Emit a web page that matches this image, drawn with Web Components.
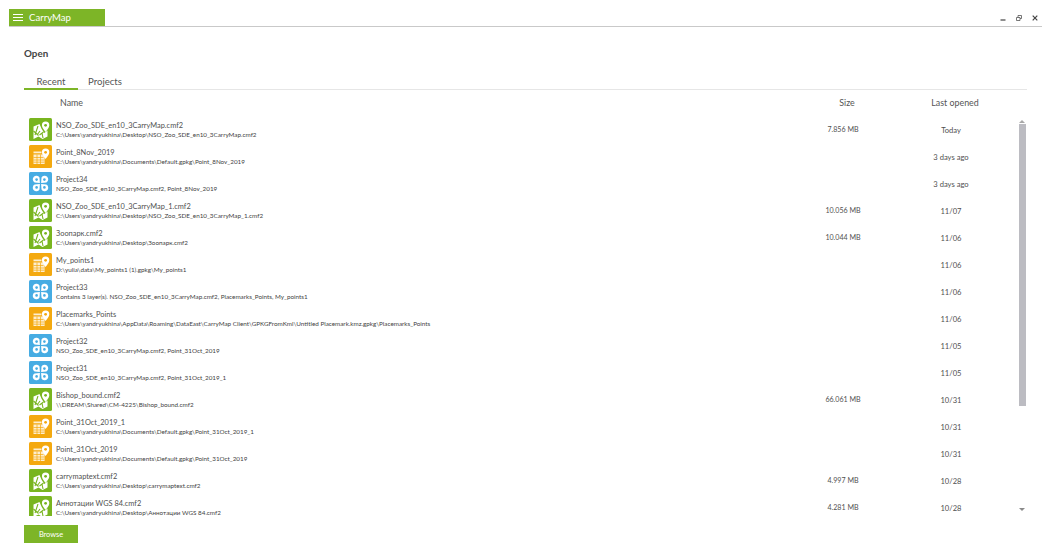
<!DOCTYPE html>
<html>
<head>
<meta charset="utf-8">
<title>CarryMap</title>
<style>
	html, body { margin: 0; padding: 0; background: #fff; height: 100%; overflow: hidden; }
</style>
</head>
<body>
<carry-app></carry-app>
<script>
const FILES = [
	["map", "NSO_Zoo_SDE_en10_3CarryMap.cmf2", "C:\\Users\\yandryukhina\\Desktop\\NSO_Zoo_SDE_en10_3CarryMap.cmf2", "7.856 MB", "Today"],
	["gpkg", "Point_8Nov_2019", "C:\\Users\\yandryukhina\\Documents\\Default.gpkg\\Point_8Nov_2019", "", "3 days ago"],
	["project", "Project34", "NSO_Zoo_SDE_en10_3CarryMap.cmf2, Point_8Nov_2019", "", "3 days ago"],
	["map", "NSO_Zoo_SDE_en10_3CarryMap_1.cmf2", "C:\\Users\\yandryukhina\\Desktop\\NSO_Zoo_SDE_en10_3CarryMap_1.cmf2", "10.056 MB", "11/07"],
	["map", "Зоопарк.cmf2", "C:\\Users\\yandryukhina\\Desktop\\Зоопарк.cmf2", "10.044 MB", "11/06"],
	["gpkg", "My_points1", "D:\\yulia\\data\\My_points1 (1).gpkg\\My_points1", "", "11/06"],
	["project", "Project33", "Contains 3 layer(s). NSO_Zoo_SDE_en10_3CarryMap.cmf2, Placemarks_Points, My_points1", "", "11/06"],
	["gpkg", "Placemarks_Points", "C:\\Users\\yandryukhina\\AppData\\Roaming\\DataEast\\CarryMap Client\\GPKGFromKml\\Untitled Placemark.kmz.gpkg\\Placemarks_Points", "", "11/06"],
	["project", "Project32", "NSO_Zoo_SDE_en10_3CarryMap.cmf2, Point_31Oct_2019", "", "11/05"],
	["project", "Project31", "NSO_Zoo_SDE_en10_3CarryMap.cmf2, Point_31Oct_2019_1", "", "11/05"],
	["map", "Bishop_bound.cmf2", "\\\\DREAM\\Shared\\CM-4225\\Bishop_bound.cmf2", "66.061 MB", "10/31"],
	["gpkg", "Point_31Oct_2019_1", "C:\\Users\\yandryukhina\\Documents\\Default.gpkg\\Point_31Oct_2019_1", "", "10/31"],
	["gpkg", "Point_31Oct_2019", "C:\\Users\\yandryukhina\\Documents\\Default.gpkg\\Point_31Oct_2019", "", "10/31"],
	["map", "carrymaptext.cmf2", "C:\\Users\\yandryukhina\\Desktop\\carrymaptext.cmf2", "4.997 MB", "10/28"],
	["map", "Аннотации WGS 84.cmf2", "C:\\Users\\yandryukhina\\Desktop\\Аннотации WGS 84.cmf2", "4.281 MB", "10/28"]
];

const PIN = `<path d="M16.6 3.6a3.7 3.7 0 0 0-3.7 3.7c0 2.6 3.7 6.6 3.7 6.6s3.7-4 3.7-6.6a3.7 3.7 0 0 0-3.7-3.7z" fill="#fff"/>`;

// teardrop whose tip points at the middle of the icon
const DROP = `<path d="M10.9 10.9L5.6 10.5A3.6 3.6 0 1 1 10.5 5.6Z" fill="#fff"/>`;

const GLYPHS = {
	map: (bg) => `
		<path d="M4.5 8.5l6-2.5 2.2 5 2.6 4 3.2-2.4v6l-5 2.4-4-2.4-5 2.4z" fill="#fff"/>
		<path d="M4.5 13l5 4.5M9 8l-3 9M11 13l-3 4M13 15l1 5M10.5 17l4-3" stroke="${bg}" stroke-width="1.1" fill="none"/>
		${PIN}<circle cx="16.6" cy="7.3" r="1.4" fill="${bg}"/>`,
	gpkg: (bg) => `
		<path d="M4.5 6.5h8v1.8h-8zM4.5 9.5h9.5l1.6 3v6.5H4.5z" fill="#fff" opacity=".8"/>
		<path d="M4.5 12.5h10M4.5 15h11M4.5 17.2h11M8 9.5v9.5M11.5 9.5v9.5" stroke="${bg}" stroke-width=".7" fill="none"/>
		${PIN}<circle cx="16.6" cy="7.3" r="1.4" fill="${bg}"/>`,
	project: (bg) => [0, 90, 180, 270].map((deg) => `
		<g transform="rotate(${deg} 11.5 11.5)">
			${DROP}<circle cx="7.6" cy="7.6" r="1.3" fill="${bg}"/>
		</g>`).join("")
};

const COLORS = { map: "#79b51f", gpkg: "#f4a90f", project: "#46ace3" };

class FileIcon extends HTMLElement {
	connectedCallback() {
		const kind = this.getAttribute("kind") || "map";
		const bg = COLORS[kind];
		this.attachShadow({ mode: "open" }).innerHTML = `
      <style>
        :host { display: block; width: 23px; height: 23px; }
        svg { display: block; }
      </style>
      <svg width="23" height="23" viewBox="0 0 23 23">
        <rect width="23" height="23" rx="1.5" fill="${bg}"/>
        ${GLYPHS[kind](bg)}
      </svg>
    `;
	}
}
customElements.define("file-icon", FileIcon);

class FileRow extends HTMLElement {
	connectedCallback() {
		this.attachShadow({ mode: "open" }).innerHTML = `
      <style>
        :host {
          display: grid;
          grid-template-columns: 27px 737px 100px 8px 100px;
          align-items: center;
          height: 27px;
          padding-left: 5px;
          color: #4a4a4a;
          flex: none;
        }
        .text { min-width: 0; }
        .name { font-size: 7.4px; line-height: 9px; color: #505050; white-space: nowrap; }
        .path { font-size: 6.3px; line-height: 9px; color: #3f3f3f; white-space: nowrap; }
        .size, .date { text-align: center; color: #505050; }
        .date { grid-column: 5; font-size: 7.6px; }
        .size { grid-column: 3; font-size: 7.1px; }
      </style>
      <file-icon kind="${this.getAttribute("kind")}"></file-icon>
      <div class="text">
        <div class="name"><slot name="name"></slot></div>
        <div class="path"><slot name="path"></slot></div>
      </div>
      <div class="size"><slot name="size"></slot></div>
      <div class="date"><slot name="date"></slot></div>
    `;
	}
}
customElements.define("file-row", FileRow);

class FileList extends HTMLElement {
	constructor() {
		super();
		this.attachShadow({ mode: "open" }).innerHTML = `
      <style>
        :host {
          display: flex;
          flex-direction: column;
          height: 400px;
          overflow: hidden;
        }
      </style>
      <slot></slot>
    `;
	}

	set files(list) {
		list.forEach(([kind, name, path, size, date]) => {
			const row = document.createElement("file-row");
			row.setAttribute("kind", kind);
			const parts = { name, path, size, date };
			for (const key in parts) {
				const span = document.createElement("span");
				span.slot = key;
				span.textContent = parts[key];
				row.appendChild(span);
			}
			this.appendChild(row);
		});
	}
}
customElements.define("file-list", FileList);

class ScrollTrack extends HTMLElement {
	constructor() {
		super();
		this.attachShadow({ mode: "open" }).innerHTML = `
      <style>
        :host {
          display: flex;
          flex-direction: column;
          align-items: center;
          width: 8px;
          height: 400px;
        }
        .arrow { width: 0; height: 0; border-left: 3px solid transparent; border-right: 3px solid transparent; flex: none; }
        .up { border-bottom: 3px solid #a8a8a8; margin-top: 4px; }
        .down { border-top: 3px solid #8a8a8a; margin-top: 102px; }
        .thumb { width: 7px; height: 282px; background: #bcbcc2; margin-top: 1px; flex: none; }
      </style>
      <div class="arrow up"></div>
      <div class="thumb"></div>
      <div class="arrow down"></div>
    `;
	}
}
customElements.define("scroll-track", ScrollTrack);

class TitleBar extends HTMLElement {
	constructor() {
		super();
		this.attachShadow({ mode: "open" }).innerHTML = `
      <style>
        :host {
          display: flex;
          align-items: center;
          justify-content: space-between;
          height: 17px;
          margin: 9px 14px 0 9px;
          border-bottom: 1px solid #c9c9c9;
        }
        .brand {
          display: flex;
          align-items: center;
          gap: 6px;
          width: 96px;
          height: 17px;
          padding-left: 4px;
          box-sizing: border-box;
          background: #7db527;
          color: #fff;
          font-size: 9.6px;
        }
        .burger { display: flex; flex-direction: column; gap: 2px; width: 10px; }
        .burger i { display: block; height: 1px; background: #fff; }
        .controls { display: flex; align-items: center; gap: 10px; margin: 0 4px 0 0; }
        svg { display: block; }
      </style>
      <div class="brand">
        <div class="burger"><i></i><i></i><i></i></div>
        <span>CarryMap</span>
      </div>
      <div class="controls">
        <svg width="6" height="6" viewBox="0 0 6 6"><path d="M0.5 5h5" stroke="#444" stroke-width="1.2"/></svg>
        <svg width="6" height="6" viewBox="0 0 6 6"><path d="M0.5 2.5h3.5v3h-3.5zM2 2.5v-2h3.5v3h-1.5" fill="none" stroke="#555" stroke-width=".8"/></svg>
        <svg width="6" height="6" viewBox="0 0 6 6"><path d="M.7.7l4.6 4.6M5.3.7L.7 5.3" stroke="#444" stroke-width="1.2"/></svg>
      </div>
    `;
	}
}
customElements.define("title-bar", TitleBar);

class TabStrip extends HTMLElement {
	constructor() {
		super();
		this.attachShadow({ mode: "open" }).innerHTML = `
      <style>
        :host {
          display: flex;
          height: 17px;
          box-sizing: border-box;
          border-bottom: 1px solid #e6e6e6;
          font-size: 9.6px;
          color: #555;
        }
        .tab { box-sizing: content-box; height: 15px; line-height: 18px; text-align: center; }
        .on { width: 54px; border-bottom: 2px solid #7db527; }
        .off { margin-left: 10px; }
      </style>
      <div class="tab on">Recent</div>
      <div class="tab off">Projects</div>
    `;
	}
}
customElements.define("tab-strip", TabStrip);

class ListHeader extends HTMLElement {
	constructor() {
		super();
		this.attachShadow({ mode: "open" }).innerHTML = `
      <style>
        :host {
          display: grid;
          grid-template-columns: 36px 737px 100px 8px 100px;
          align-items: center;
          height: 24px;
          padding-bottom: 2px;
          font-size: 8.9px;
          color: #555;
        }
        .c { text-align: center; }
        .name { grid-column: 2; }
        .size { grid-column: 3; }
        .date { grid-column: 5; }
      </style>
      <div class="name">Name</div>
      <div class="c size">Size</div>
      <div class="c date">Last opened</div>
    `;
	}
}
customElements.define("list-header", ListHeader);

class CarryButton extends HTMLElement {
	constructor() {
		super();
		this.attachShadow({ mode: "open" }).innerHTML = `
      <style>
        :host {
          display: flex;
          align-items: center;
          justify-content: center;
          width: 54px;
          height: 18px;
          background: #7db527;
          color: #fff;
          font-size: 7.4px;
        }
      </style>
      <slot></slot>
    `;
	}
}
customElements.define("carry-button", CarryButton);

class CarryApp extends HTMLElement {
	constructor() {
		super();
		this.attachShadow({ mode: "open" }).innerHTML = `
      <style>
        :host {
          display: block;
          width: 1056px;
          height: 555px;
          overflow: hidden;
          font-family: Lato, "Noto Sans", sans-serif;
        }
        main { padding: 20px 29px 0 24px; }
        h1 { margin: 0 0 13px; font-size: 9.8px; line-height: 13px; font-weight: 700; color: #444; }
        .body { display: flex; }
        file-list { width: 994px; }
        carry-button { margin-top: 9px; }
      </style>
      <title-bar></title-bar>
      <main>
        <h1>Open</h1>
        <tab-strip></tab-strip>
        <list-header></list-header>
        <div class="body">
          <file-list></file-list>
          <scroll-track></scroll-track>
        </div>
        <carry-button>Browse</carry-button>
      </main>
    `;
		this.shadowRoot.querySelector("file-list").files = FILES;
	}
}
customElements.define("carry-app", CarryApp);
</script>
</body>
</html>
